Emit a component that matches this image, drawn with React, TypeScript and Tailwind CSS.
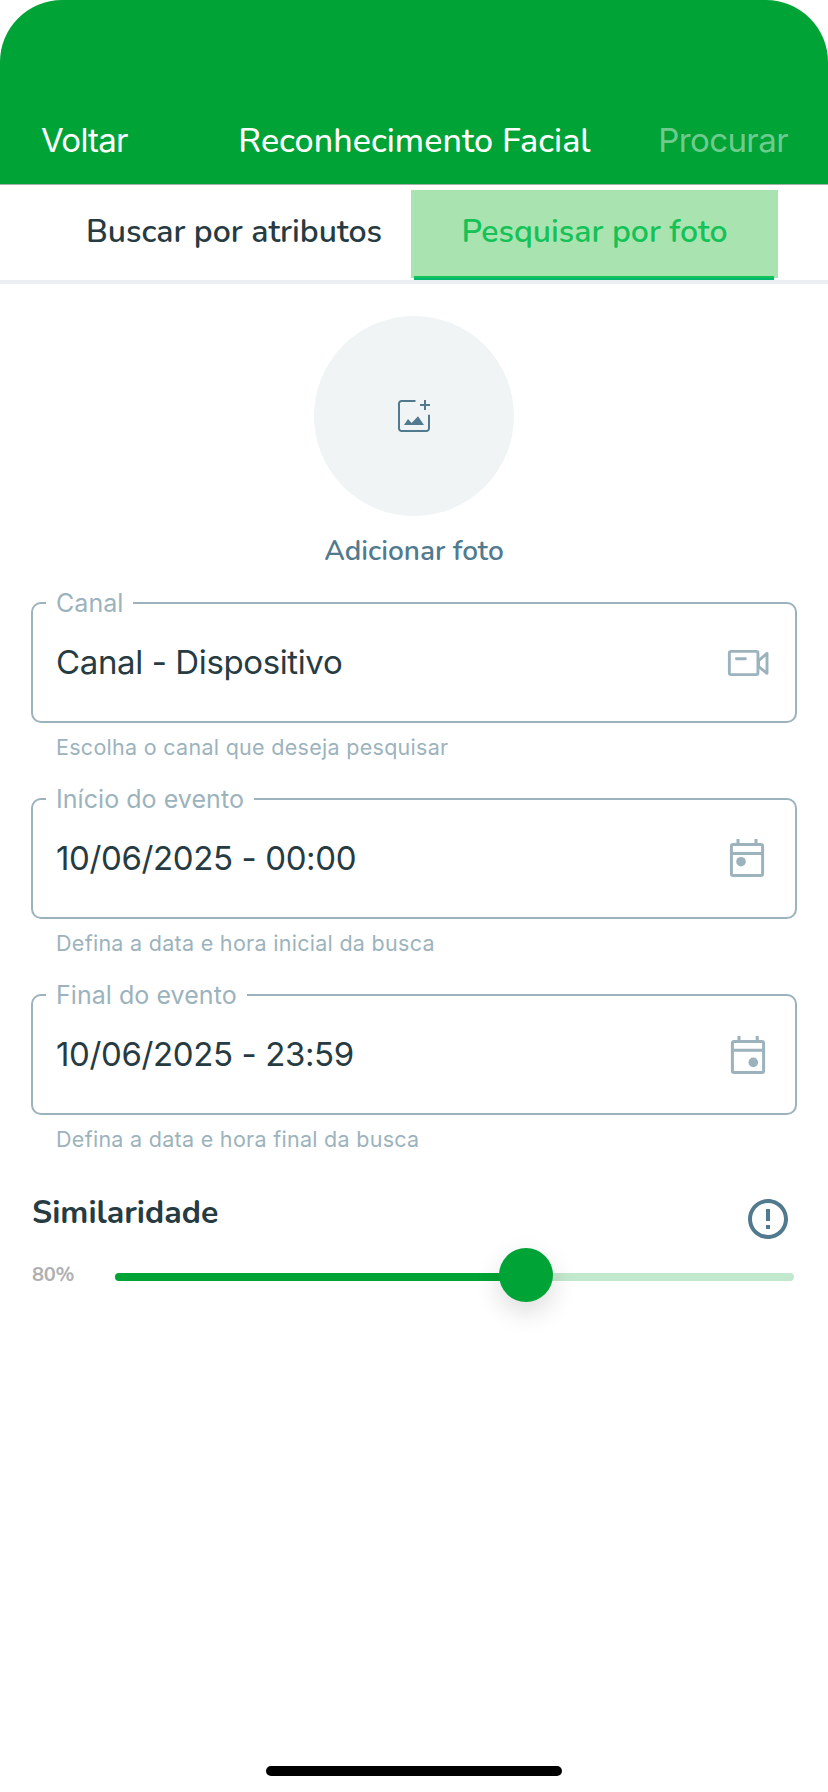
import React from 'react';
import { MdErrorOutline } from 'react-icons/md';

const AddPhotoIcon = () => (
  <svg width="32" height="32" viewBox="0 0 32 32" fill="none" stroke="#527a8e" strokeWidth="2">
    <path d="M17.5 1H3.5A2.5 2.5 0 0 0 1 3.5V28.5A2.5 2.5 0 0 0 3.5 31H28.5A2.5 2.5 0 0 0 31 28.5V14.7" />
    <path d="M22 5H32M27 0V10" />
    <path d="M6 25L10 19L13.6 23L20 16.3L26 25Z" fill="#527a8e" stroke="none" />
  </svg>
);

const CameraIcon = () => (
  <svg width="48" height="48" viewBox="0 0 48 48" fill="none" stroke="#9cb3bd" strokeWidth="2.9" strokeLinejoin="round">
    <rect x="5.35" y="13.35" width="28.6" height="23.3" rx="1.8" />
    <path d="M12.4 20.7H21.4" strokeLinecap="round" />
    <path d="M34.6 22.6L43 15.4V35.4L34.6 28.6Z" />
  </svg>
);

const CalendarStartIcon = () => (
  <svg width="48" height="48" viewBox="0 0 48 48" fill="none" stroke="#9cb3bd" strokeWidth="3">
    <rect x="7.4" y="10.4" width="31.2" height="31.2" rx="1.8" />
    <path d="M7.4 19.5H38.6M14 5V10.5M32 5V10.5" />
    <circle cx="17" cy="27.7" r="4.8" fill="#9cb3bd" stroke="none" />
  </svg>
);

const CalendarEndIcon = () => (
  <svg width="48" height="48" viewBox="0 0 48 48" fill="none" stroke="#9cb3bd" strokeWidth="3">
    <rect x="8.4" y="11.4" width="31.2" height="31.2" rx="1.8" />
    <path d="M8.4 20.2H39.6M15 6V11.5M33.2 6V11.5" />
    <circle cx="29.3" cy="32.4" r="4.8" fill="#9cb3bd" stroke="none" />
  </svg>
);

interface FieldProps {
  label: string;
  value: string;
  helper: string;
  icon: React.ReactNode;
}

const Field = ({ label, value, helper, icon }: FieldProps) => (
  <div className="h-[196px] font-['Inter',sans-serif]">
    <fieldset className="h-[132px] rounded-[10px] border-2 border-[#9cb3bd]">
      <legend className="ml-[13px] h-6 px-2.5 text-[25px] leading-6 tracking-[0.05px] text-[#9cb3bd]">{label}</legend>
      <div className="flex h-[106px] items-center justify-between pb-3 pl-[23px] pr-[23px]">
        <span className="pt-0.5 text-[33px] tracking-[-0.38px] text-[#263b42]">{value}</span>
        {icon}
      </div>
    </fieldset>
    <p className="mt-3 pl-[25px] text-[21.5px] leading-6 tracking-[0.29px] text-[#9cb3bd]">{helper}</p>
  </div>
);

const fields: FieldProps[] = [
  {
    label: 'Canal',
    value: 'Canal - Dispositivo',
    helper: 'Escolha o canal que deseja pesquisar',
    icon: <CameraIcon />,
  },
  {
    label: 'Início do evento',
    value: '10/06/2025 - 00:00',
    helper: 'Defina a data e hora inicial da busca',
    icon: <CalendarStartIcon />,
  },
  {
    label: 'Final do evento',
    value: '10/06/2025 - 23:59',
    helper: 'Defina a data e hora final da busca',
    icon: <CalendarEndIcon />,
  },
];

export default function App() {
  return (
    <div className="flex h-[1792px] w-[828px] flex-col overflow-hidden bg-white font-['Nunito','Lato',sans-serif]">
      {/* Header */}
      <header className="h-[185px] rounded-t-[62px] border-b border-[#a3b3a6] bg-[#00a335] pt-[116px] text-white">
        <div className="grid h-12 grid-cols-[1fr_auto_1fr] items-center pl-[41px] pr-[40px]">
          <button className="justify-self-start pb-0.5 font-['Inter',sans-serif] text-[33px] tracking-[-0.75px]">Voltar</button>
          <h1 className="text-[34px] font-medium tracking-[0.05px]">Reconhecimento Facial</h1>
          <button className="justify-self-end pb-0.5 font-['Inter',sans-serif] text-[33px] tracking-[-0.58px] text-white/45">Procurar</button>
        </div>
      </header>

      {/* Tabs */}
      <nav className="flex h-[99px] border-b-4 border-[#ebeff3] px-[54px] pt-[5px] text-[32px] font-semibold">
        <button className="h-[88px] w-[360px] pb-1 text-[#263b42]">Buscar por atributos</button>
        <button className="relative -ml-[3px] -mr-1 h-[88px] w-[367px] shrink-0 bg-[#a9e3af] pb-1 text-[#14c257]">
          Pesquisar por foto
          <span className="absolute -bottom-0.5 left-[3px] h-1 w-[360px] border-b-2 border-[#00b96c] bg-[#14c257]" />
        </button>
      </nav>

      {/* Photo picker */}
      <div className="flex flex-col items-center pt-8">
        <div className="flex h-[200px] w-[200px] items-center justify-center rounded-full bg-[#f0f4f5]">
          <AddPhotoIcon />
        </div>
        <span className="mt-[17px] text-[28px] font-semibold leading-9 text-[#527a8e]">Adicionar foto</span>
      </div>

      {/* Filters */}
      <div className="mt-[22px] pl-[31px] pr-[31px]">
        {fields.map((field) => (
          <Field key={field.label} {...field} />
        ))}
      </div>

      {/* Similarity */}
      <section className="mt-4 pl-8 pr-[34px]">
        <div className="flex h-12 items-start justify-between pr-0.5">
          <h2 className="text-[32px] font-bold leading-9 text-[#263b42]">Similaridade</h2>
          <MdErrorOutline className="h-12 w-12 text-[#527a8e]" />
        </div>
        <div className="mt-[5px] flex h-[54px] items-center justify-between">
          <span className="text-[20px] font-bold tracking-[-0.3px] text-[#b0b0b0]">80%</span>
          <div className="relative mt-1 h-2 w-[679px] rounded-full bg-[#c2e8cd]">
            <div className="h-2 w-[411px] rounded-full bg-[#00a335]" />
            <div className="absolute -top-[25px] left-[384px] h-[54px] w-[54px] rounded-full bg-[#00a335] shadow-[0_10px_26px_rgba(0,0,0,0.14)]" />
          </div>
        </div>
      </section>

      {/* Home indicator */}
      <div className="mx-auto mb-4 mt-auto h-2.5 w-[296px] rounded-full bg-black" />
    </div>
  );
}
